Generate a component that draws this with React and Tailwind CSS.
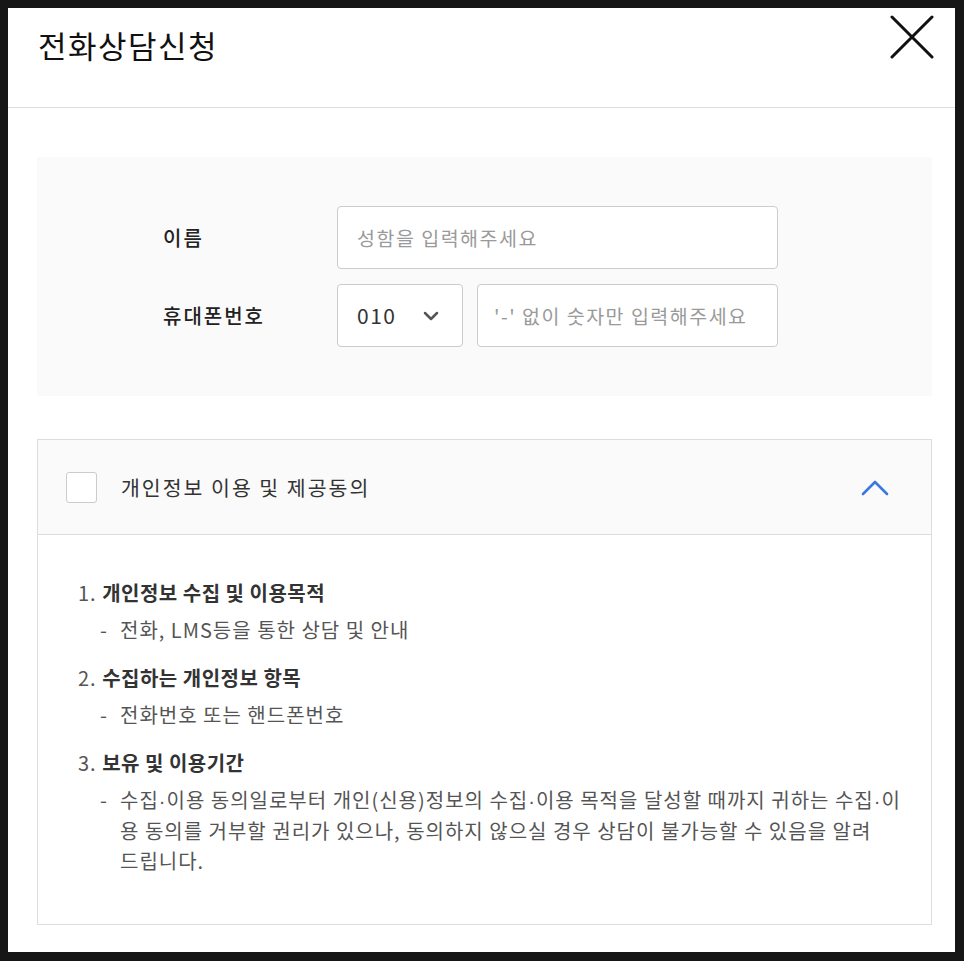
import React, { useState } from "react";

const font = { fontFamily: '"Noto Sans CJK KR", "Noto Sans", sans-serif' };

function CloseIcon() {
  return (
    <svg width="44" height="44" viewBox="0 0 44 44" fill="none">
      <path d="M2 2L42 42M42 2L2 42" stroke="#111" strokeWidth="3" strokeLinecap="round" />
    </svg>
  );
}

function ChevronDown() {
  return (
    <svg width="16" height="10" viewBox="0 0 16 10" fill="none">
      <path d="M2 2L8 8L14 2" stroke="#555" strokeWidth="2.5" strokeLinecap="round" strokeLinejoin="round" />
    </svg>
  );
}

function ChevronUp() {
  return (
    <svg width="28" height="17" viewBox="0 0 28 17" fill="none">
      <path d="M2 15L14 3L26 15" stroke="#3b78de" strokeWidth="2.6" strokeLinecap="round" strokeLinejoin="round" />
    </svg>
  );
}

// latin middle dot, narrower than the CJK one
const Dot = () => <span className="font-['Liberation_Sans']">·</span>;

function Sub({ children }) {
  return (
    <div className="mt-[7px] pl-[22px] flex">
      <span className="w-[20px] shrink-0">-</span>
      <p>{children}</p>
    </div>
  );
}

export default function App() {
  const [name, setName] = useState("");
  const [phone, setPhone] = useState("");
  const [agree, setAgree] = useState(false);
  const [open, setOpen] = useState(true);

  return (
    <div className="w-[964px] h-[961px] bg-[#161616] pt-[8px] pl-[8px] pr-[9px] pb-[9px]" style={font}>
      <div className="h-full bg-white flex flex-col">
        <div className="h-[100px] shrink-0 border-b border-[#dddddd] flex items-start justify-between pl-[30px] pr-[21px]">
          <h1 className="text-[31px] leading-none text-[#111] font-normal mt-[21px] tracking-[1.5px]">전화상담신청</h1>
          <button className="mt-[7px]"><CloseIcon /></button>
        </div>

        <div className="pl-[29px] pr-[23px] pt-[49px]">
          <div className="bg-[#fafafa] pl-[126px] py-[49px] flex flex-col gap-[15px]">
            <div className="flex items-center">
              <label className="w-[174px] text-[20px] font-medium text-[#222] tracking-[2px]">이름</label>
              <input
                value={name}
                onChange={e => setName(e.target.value)}
                placeholder="성함을 입력해주세요"
                className="w-[441px] h-[63px] bg-white border border-[#cccccc] rounded-[4px] px-[19px] text-[19.5px] tracking-[1.5px] text-[#333] placeholder:text-[#9a9a9a] outline-none"
              />
            </div>
            <div className="flex items-center">
              <label className="w-[174px] text-[20px] font-medium text-[#222] tracking-[2px]">휴대폰번호</label>
              <div className="w-[126px] h-[63px] bg-white border border-[#cccccc] rounded-[4px] pl-[19px] pr-[23px] flex items-center justify-between">
                <span className="text-[21px] tracking-[1.5px] text-[#333]">010</span>
                <ChevronDown />
              </div>
              <input
                value={phone}
                onChange={e => setPhone(e.target.value)}
                placeholder="'-' 없이 숫자만 입력해주세요"
                className="ml-[14px] w-[301px] h-[63px] bg-white border border-[#cccccc] rounded-[4px] px-[16px] text-[19.5px] tracking-[1.5px] text-[#333] placeholder:text-[#9a9a9a] outline-none"
              />
            </div>
          </div>

          <div className="mt-[43px] border border-[#dddddd]">
            <div className="h-[95px] bg-[#fafafa] border-b border-[#dddddd] flex items-center pl-[28px] pr-[42px]">
              <button
                onClick={() => setAgree(!agree)}
                className={"w-[31px] h-[31px] rounded-[3px] border border-[#cccccc] " + (agree ? "bg-[#3b78de]" : "bg-white")}
              />
              <span className="ml-[24px] text-[20.5px] tracking-[2px] text-[#333] flex-1">개인정보 이용 및 제공동의</span>
              <button onClick={() => setOpen(!open)}><ChevronUp /></button>
            </div>
            {open && (
              <div className="pl-[40px] pr-[24px] pt-[43px] pb-[48px] text-[20px] tracking-[1px] leading-[30px] text-[#555]">
                <p>1. <b className="font-bold text-[#333] tracking-[0.5px]">개인정보 수집 및 이용목적</b></p>
                <Sub>전화, LMS등을 통한 상담 및 안내</Sub>
                <p className="mt-[18px]">2. <b className="font-bold text-[#333] tracking-[0.5px]">수집하는 개인정보 항목</b></p>
                <Sub>전화번호 또는 핸드폰번호</Sub>
                <p className="mt-[18px]">3. <b className="font-bold text-[#333] tracking-[0.5px]">보유 및 이용기간</b></p>
                <Sub>
                  수집<Dot />이용 동의일로부터 개인(신용)정보의 수집<Dot />이용 목적을 달성할 때까지 귀하는 수집<Dot />이용 동의를 거부할 권리가 있으나, 동의하지 않으실 경우 상담이 불가능할 수 있음을 알려<span className="whitespace-nowrap">드립니다.</span>
                </Sub>
              </div>
            )}
          </div>
        </div>
      </div>
    </div>
  );
}
